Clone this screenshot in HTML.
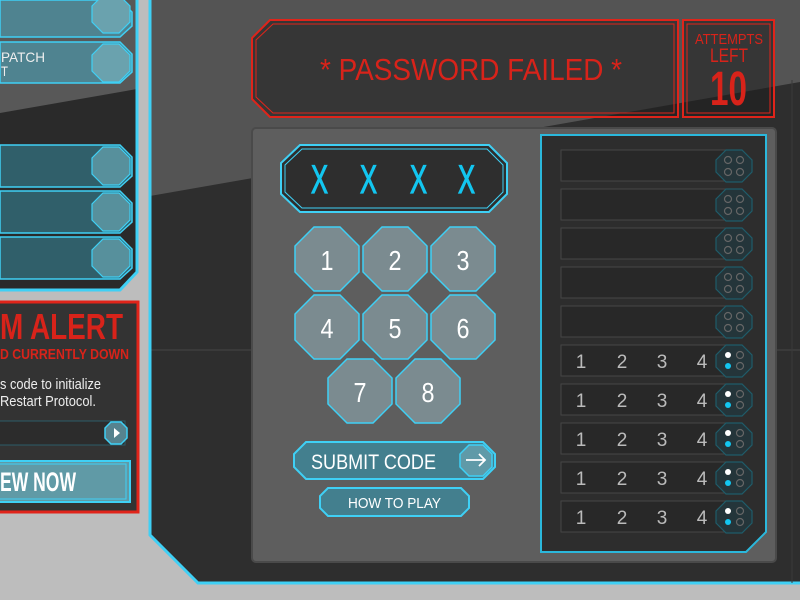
<!DOCTYPE html>
<html><head><meta charset="utf-8"><style>
html,body{margin:0;padding:0;background:#bdbdbd;}
svg{display:block}
text{font-family:"Liberation Sans",sans-serif;}
</style></head><body>
<svg width="800" height="600" viewBox="0 0 800 600" xmlns="http://www.w3.org/2000/svg">
<defs>
<polygon id="k" points="19,0 45,0 64,19 64,45 45,64 19,64 0,45 0,19"/>
<polygon id="r" points="10,0 26,0 36,10 36,22 26,32 10,32 0,22 0,10"/>
<polygon id="l" points="11,0 27,0 38,11 38,27 27,38 11,38 0,27 0,11"/>
<g id="e"><circle cx="-6" cy="-6" r="3.5" fill="none" stroke="#666" stroke-width="1.2"/><circle cx="6" cy="-6" r="3.5" fill="none" stroke="#666" stroke-width="1.2"/><circle cx="-6" cy="6" r="3.5" fill="none" stroke="#666" stroke-width="1.2"/><circle cx="6" cy="6" r="3.5" fill="none" stroke="#666" stroke-width="1.2"/></g>
<g id="f"><circle cx="-6" cy="-6" r="3" fill="#fff"/><circle cx="6" cy="-6" r="3.5" fill="none" stroke="#666" stroke-width="1.2"/><circle cx="-6" cy="5" r="3" fill="#13c6f0"/><circle cx="6" cy="5" r="3.5" fill="none" stroke="#666" stroke-width="1.2"/></g>
</defs>
<rect width="800" height="600" fill="#bdbdbd"/>
<path d="M150,0 H800 V583 H198 L150,535 Z" fill="#2e2e2e"/>
<path d="M150,0 H800 V82 L150,196 Z" fill="#545454"/>
<line x1="150" y1="350" x2="800" y2="350" stroke="#3a3a3a" stroke-width="2"/>
<path d="M150,0 V535 L198,583 H800" fill="none" stroke="#3fd0f5" stroke-width="3"/>
<line x1="792" y1="80" x2="792" y2="583" stroke="#3a3a3a" stroke-width="1"/>
<path d="M0,0 H137 V272 L120,290 H0 Z" fill="#2a2a2a"/>
<path d="M0,0 H137 V89 L0,113 Z" fill="#585858"/>
<path d="M137,0 V272 L120,290 H0" fill="none" stroke="#3fd0f5" stroke-width="3"/>
<g stroke="#3fd0f5" stroke-width="1.5">
<path d="M0,0 H120 L132,12 V26 L120,37 H0 Z" fill="#4f8390"/>
<path d="M0,42 H120 L132,54 V72 L120,83 H0 Z" fill="#4f8390"/>
<path d="M0,145 H120 L132,157 V176 L120,187 H0 Z" fill="#305f6a"/>
<path d="M0,191 H120 L132,203 V222 L120,233 H0 Z" fill="#305f6a"/>
<path d="M0,237 H120 L132,249 V268 L120,279 H0 Z" fill="#305f6a"/>
</g>
<g stroke="#3fd0f5" stroke-width="1.2">
<use href="#l" x="92" y="-5" fill="#6aa2ae"/>
<use href="#l" x="92" y="44" fill="#6aa2ae"/>
<use href="#l" x="92" y="147" fill="#57909c"/>
<use href="#l" x="92" y="193" fill="#57909c"/>
<use href="#l" x="92" y="239" fill="#57909c"/>
</g>
<text x="1" y="62" fill="#eee" font-size="14" textLength="44" lengthAdjust="spacingAndGlyphs">PATCH</text>
<text x="1" y="76" fill="#eee" font-size="14" textLength="7" lengthAdjust="spacingAndGlyphs">T</text>
<rect x="-5" y="302" width="143" height="210" fill="#333" stroke="#e0241a" stroke-width="3"/>
<text x="0" y="339" fill="#d8231a" font-size="36" font-weight="bold" textLength="123" lengthAdjust="spacingAndGlyphs">M ALERT</text>
<text x="0" y="359" fill="#d8231a" font-size="15" font-weight="bold" textLength="129" lengthAdjust="spacingAndGlyphs">D CURRENTLY DOWN</text>
<text x="0" y="389" fill="#eee" font-size="15" textLength="101" lengthAdjust="spacingAndGlyphs">s code to initialize</text>
<text x="0" y="406" fill="#eee" font-size="15" textLength="96" lengthAdjust="spacingAndGlyphs">Restart Protocol.</text>
<rect x="-5" y="421" width="130" height="24" fill="#2c2c2c" stroke="#2d5d69" stroke-width="1"/>
<polygon points="111,422 121,422 127,428 127,438 121,444 111,444 105,438 105,428" fill="#56838f" stroke="#3fd0f5" stroke-width="1.5"/>
<polygon points="114,428 114,438 120,433" fill="#fff"/>
<rect x="-5" y="461" width="135" height="41" fill="#609aa6" stroke="#3fd0f5" stroke-width="2"/>
<rect x="-5" y="464" width="131" height="35" fill="none" stroke="#3fd0f5" stroke-width="1"/>
<text x="0" y="491" fill="#fff" font-size="27" font-weight="bold" textLength="76" lengthAdjust="spacingAndGlyphs">EW NOW</text>
<path d="M270,20 H678 V117 H270 L252,99 V38 Z" fill="#1e1e1e" fill-opacity="0.55" stroke="#e0241a" stroke-width="2"/>
<path d="M273,24 H674 V113 H273 L256,97 V40 Z" fill="none" stroke="#e0241a" stroke-width="1"/>
<text x="320" y="80" fill="#d8231a" font-size="31" textLength="302" lengthAdjust="spacingAndGlyphs">* PASSWORD FAILED *</text>
<rect x="683" y="20" width="91" height="97" fill="#1e1e1e" fill-opacity="0.55" stroke="#e0241a" stroke-width="2"/>
<rect x="687" y="24" width="83" height="89" fill="none" stroke="#e0241a" stroke-width="1"/>
<text x="695" y="44" fill="#d8231a" font-size="15" textLength="68" lengthAdjust="spacingAndGlyphs">ATTEMPTS</text>
<text x="710" y="62" fill="#d8231a" font-size="19" textLength="38" lengthAdjust="spacingAndGlyphs">LEFT</text>
<text x="710" y="105" fill="#d8231a" font-size="48" font-weight="bold" textLength="37" lengthAdjust="spacingAndGlyphs">10</text>
<rect x="252" y="128" width="524" height="434" rx="4" fill="#5e5e5e" stroke="#4a4a4a" stroke-width="2"/>
<path d="M300,145 H489 L507,163 V194 L489,212 H300 L281,194 V163 Z" fill="#2e2e2e" stroke="#3fd0f5" stroke-width="2"/>
<path d="M302,149 H487 L503,165 V192 L487,208 H302 L285,192 V165 Z" fill="none" stroke="#3fd0f5" stroke-width="1"/>
<g fill="#13c6f0" stroke="#13c6f0" stroke-width="1.2" font-size="40">
<text x="311" y="193" textLength="17" lengthAdjust="spacingAndGlyphs">X</text>
<text x="360" y="193" textLength="17" lengthAdjust="spacingAndGlyphs">X</text>
<text x="410" y="193" textLength="17" lengthAdjust="spacingAndGlyphs">X</text>
<text x="458" y="193" textLength="17" lengthAdjust="spacingAndGlyphs">X</text>
</g>
<g fill="#7b8b90" stroke="#3fd0f5" stroke-width="1.5">
<use href="#k" x="295" y="227"/><use href="#k" x="363" y="227"/><use href="#k" x="431" y="227"/>
<use href="#k" x="295" y="295"/><use href="#k" x="363" y="295"/><use href="#k" x="431" y="295"/>
<use href="#k" x="328" y="359"/><use href="#k" x="396" y="359"/>
</g>
<g fill="#fff" font-size="28" text-anchor="middle">
<text x="327" y="270" textLength="13" lengthAdjust="spacingAndGlyphs">1</text><text x="395" y="270" textLength="13" lengthAdjust="spacingAndGlyphs">2</text><text x="463" y="270" textLength="13" lengthAdjust="spacingAndGlyphs">3</text>
<text x="327" y="338" textLength="13" lengthAdjust="spacingAndGlyphs">4</text><text x="395" y="338" textLength="13" lengthAdjust="spacingAndGlyphs">5</text><text x="463" y="338" textLength="13" lengthAdjust="spacingAndGlyphs">6</text>
<text x="360" y="402" textLength="13" lengthAdjust="spacingAndGlyphs">7</text><text x="428" y="402" textLength="13" lengthAdjust="spacingAndGlyphs">8</text>
</g>
<path d="M306,442 H483 L495,454 V467 L483,479 H306 L294,467 V454 Z" fill="#437f8e" stroke="#3fd0f5" stroke-width="2"/>
<text x="311" y="469" fill="#fff" font-size="21" textLength="125" lengthAdjust="spacingAndGlyphs">SUBMIT CODE</text>
<polygon points="469,445 483,445 492,454 492,467 483,476 469,476 460,467 460,454" fill="#5f9aa8" stroke="#3fd0f5" stroke-width="1.5"/>
<path d="M466,460 H485 M479,454 L485,460 L479,466" fill="none" stroke="#fff" stroke-width="1.8"/>
<path d="M328,488 H461 L469,496 V508 L461,516 H328 L320,508 V496 Z" fill="#437f8e" stroke="#3fd0f5" stroke-width="2"/>
<text x="348" y="508" fill="#fff" font-size="15" textLength="93" lengthAdjust="spacingAndGlyphs">HOW TO PLAY</text>
<path d="M541,135 H766 V532 L746,552 H541 Z" fill="#2d2d2d" stroke="#2bb8dc" stroke-width="2"/>
<g fill="#282828" stroke="#464646" stroke-width="1">
<rect x="561" y="150" width="180" height="31"/><rect x="561" y="189" width="180" height="31"/>
<rect x="561" y="228" width="180" height="31"/><rect x="561" y="267" width="180" height="31"/>
<rect x="561" y="306" width="180" height="31"/><rect x="561" y="345" width="180" height="31"/>
<rect x="561" y="384" width="180" height="31"/><rect x="561" y="423" width="180" height="31"/>
<rect x="561" y="462" width="180" height="31"/><rect x="561" y="501" width="180" height="31"/>
</g>
<g fill="#24353a" stroke="#1f5c6a" stroke-width="1.2">
<use href="#r" x="716" y="150"/><use href="#r" x="716" y="189"/><use href="#r" x="716" y="228"/>
<use href="#r" x="716" y="267"/><use href="#r" x="716" y="306"/><use href="#r" x="716" y="345"/>
<use href="#r" x="716" y="384"/><use href="#r" x="716" y="423"/><use href="#r" x="716" y="462"/>
<use href="#r" x="716" y="501"/>
</g>
<use href="#e" x="734" y="166"/><use href="#e" x="734" y="205"/><use href="#e" x="734" y="244"/>
<use href="#e" x="734" y="283"/><use href="#e" x="734" y="322"/>
<use href="#f" x="734" y="361"/><use href="#f" x="734" y="400"/><use href="#f" x="734" y="439"/>
<use href="#f" x="734" y="478"/><use href="#f" x="734" y="517"/>
<g fill="#bbb" font-size="19" text-anchor="middle">
<text x="581" y="368">1</text><text x="622" y="368">2</text><text x="662" y="368">3</text><text x="702" y="368">4</text>
<text x="581" y="407">1</text><text x="622" y="407">2</text><text x="662" y="407">3</text><text x="702" y="407">4</text>
<text x="581" y="446">1</text><text x="622" y="446">2</text><text x="662" y="446">3</text><text x="702" y="446">4</text>
<text x="581" y="485">1</text><text x="622" y="485">2</text><text x="662" y="485">3</text><text x="702" y="485">4</text>
<text x="581" y="524">1</text><text x="622" y="524">2</text><text x="662" y="524">3</text><text x="702" y="524">4</text>
</g>
</svg>
</body></html>
